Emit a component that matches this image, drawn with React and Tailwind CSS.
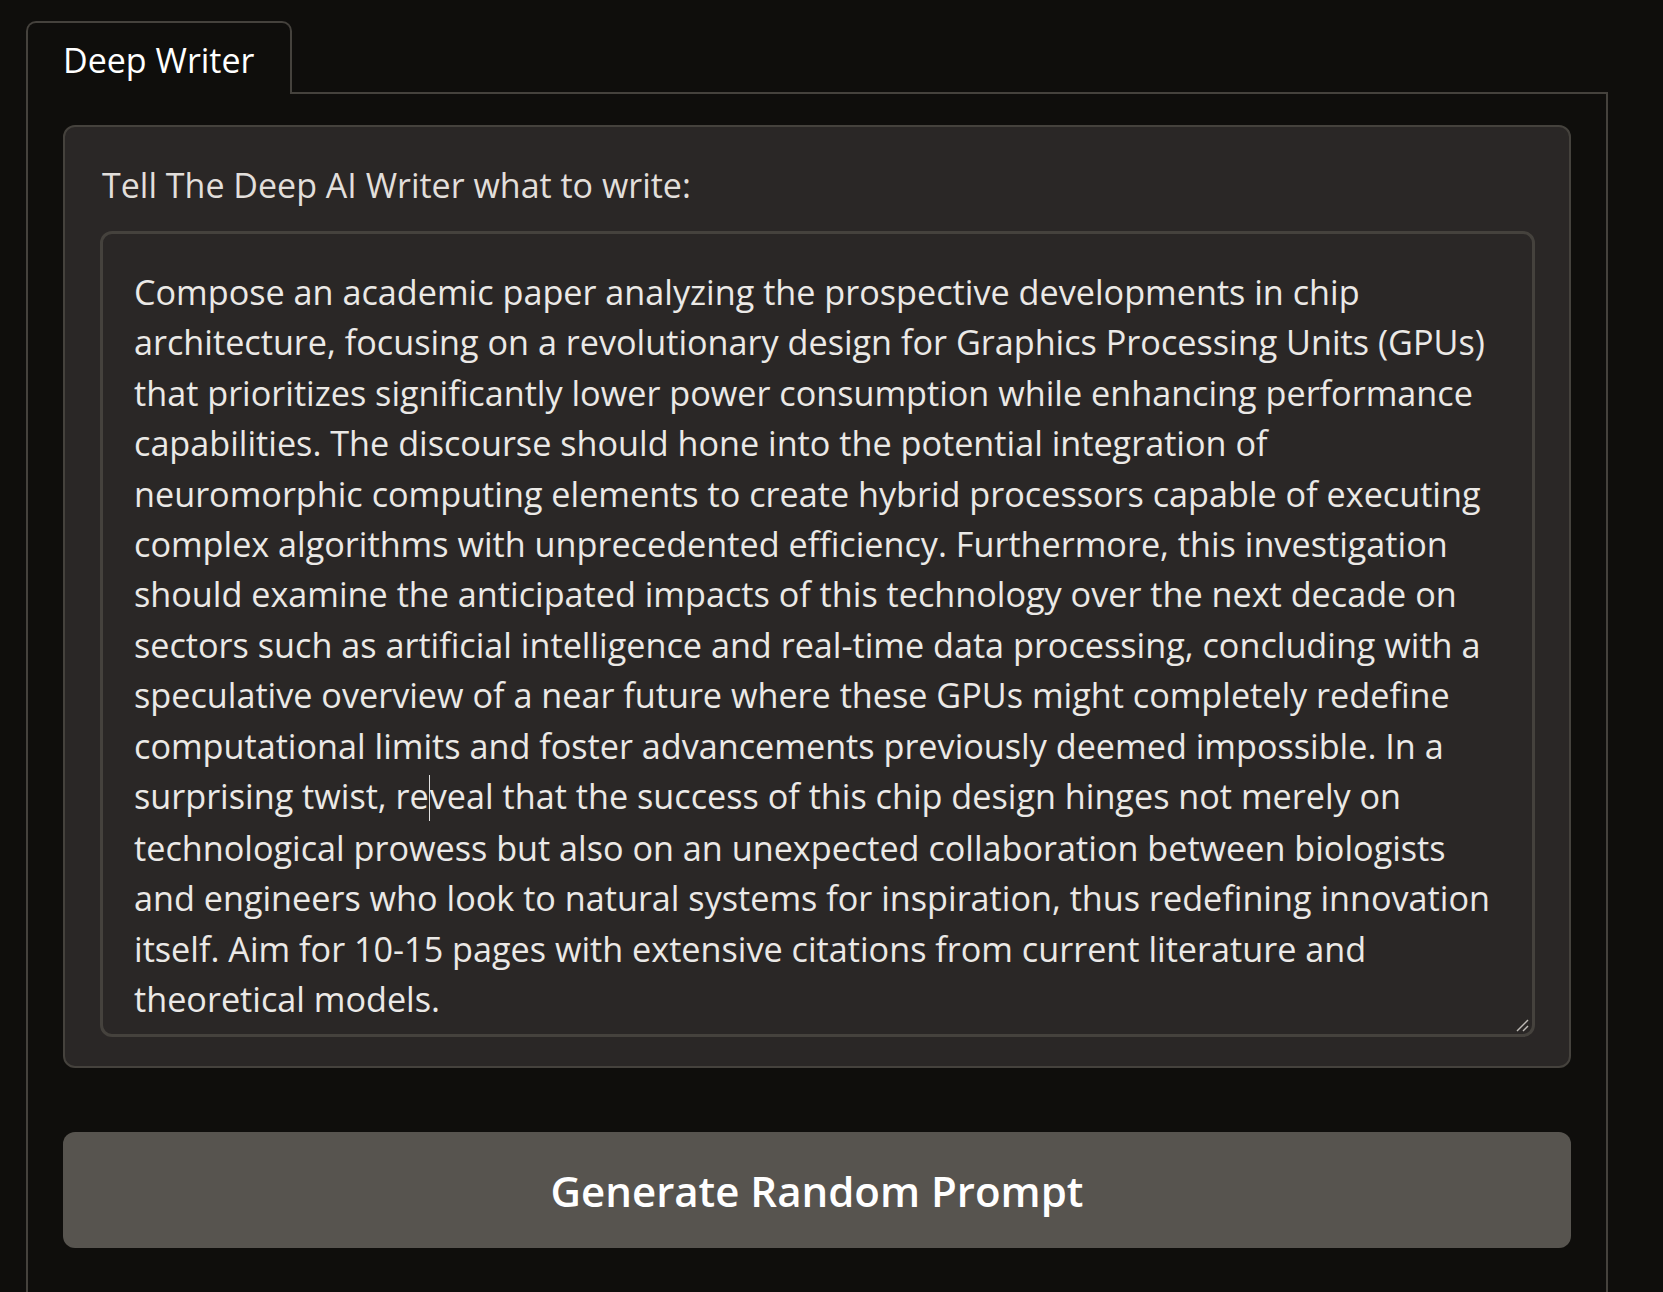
import React from "react";

const lines = [
  "Compose an academic paper analyzing the prospective developments in chip",
  "architecture, focusing on a revolutionary design for Graphics Processing Units (GPUs)",
  "that prioritizes significantly lower power consumption while enhancing performance",
  "capabilities. The discourse should hone into the potential integration of",
  "neuromorphic computing elements to create hybrid processors capable of executing",
  "complex algorithms with unprecedented efficiency. Furthermore, this investigation",
  "should examine the anticipated impacts of this technology over the next decade on",
  "sectors such as artificial intelligence and real-time data processing, concluding with a",
  "speculative overview of a near future where these GPUs might completely redefine",
  "computational limits and foster advancements previously deemed impossible. In a",
  null,
  "technological prowess but also on an unexpected collaboration between biologists",
  "and engineers who look to natural systems for inspiration, thus redefining innovation",
  "itself. Aim for 10-15 pages with extensive citations from current literature and",
  "theoretical models.",
];

export default function App() {
  return (
    <div
      className="min-h-[1292px] bg-[#0f0e0c] flex flex-col pt-[21px] pl-[26px] pr-[55px] text-[#ebe9e6]"
      style={{ fontFamily: '"Open Sans", "Noto Sans", sans-serif' }}
    >
      <div className="flex">
        <div className="relative z-10 -mb-[2px] w-[266px] h-[73px] border-2 border-b-0 border-[#45423d] rounded-t-[10px] bg-[#0f0e0c] pl-[35px] pt-[17px] text-[34px] leading-[40px] text-white">
          Deep Writer
        </div>
      </div>
      <div className="flex-1 border-2 border-b-0 border-[#45423d] px-[35px] pt-[31px] flex flex-col">
        <div className="rounded-[12px] border-2 border-[#45423d] bg-[#2a2726] pl-[35px] pr-[34px] pt-[33px] pb-[29px]">
          <div className="text-[34px] leading-[50px] text-[#e2dfdb] pl-[2px]">
            Tell The Deep AI Writer what to write:
          </div>
          <div className="relative mt-[21px] h-[806px] rounded-[12px] border-[3px] border-[#45423d] bg-[#2a2726] pl-[31px] pt-[33px] text-[34.2px] leading-[50.4px] text-[#ebe9e6] overflow-hidden">
            {lines.map((l, i) =>
              l === null ? (
                <div key={i} className="whitespace-nowrap">
                  surprising twist, re
                  <span className="inline-block w-0 h-[46px] align-middle border-l border-[#e0e0e0] -translate-y-[2px]"></span>
                  veal that the success of this chip design hinges not merely on
                </div>
              ) : (
                <div key={i} className="whitespace-nowrap">
                  {l}
                </div>
              )
            )}
            <svg
              className="absolute right-[3px] bottom-[2px]"
              width="14"
              height="14"
              viewBox="0 0 14 14"
            >
              <line x1="2" y1="13" x2="13" y2="2" stroke="#bdbab5" strokeWidth="1.5" />
              <line x1="8" y1="13" x2="13" y2="8" stroke="#bdbab5" strokeWidth="1.5" />
            </svg>
          </div>
        </div>
        <button className="mt-[64px] h-[116px] w-full rounded-[12px] bg-[#57544f] text-white text-[42px] font-semibold">
          Generate Random Prompt
        </button>
      </div>
    </div>
  );
}
